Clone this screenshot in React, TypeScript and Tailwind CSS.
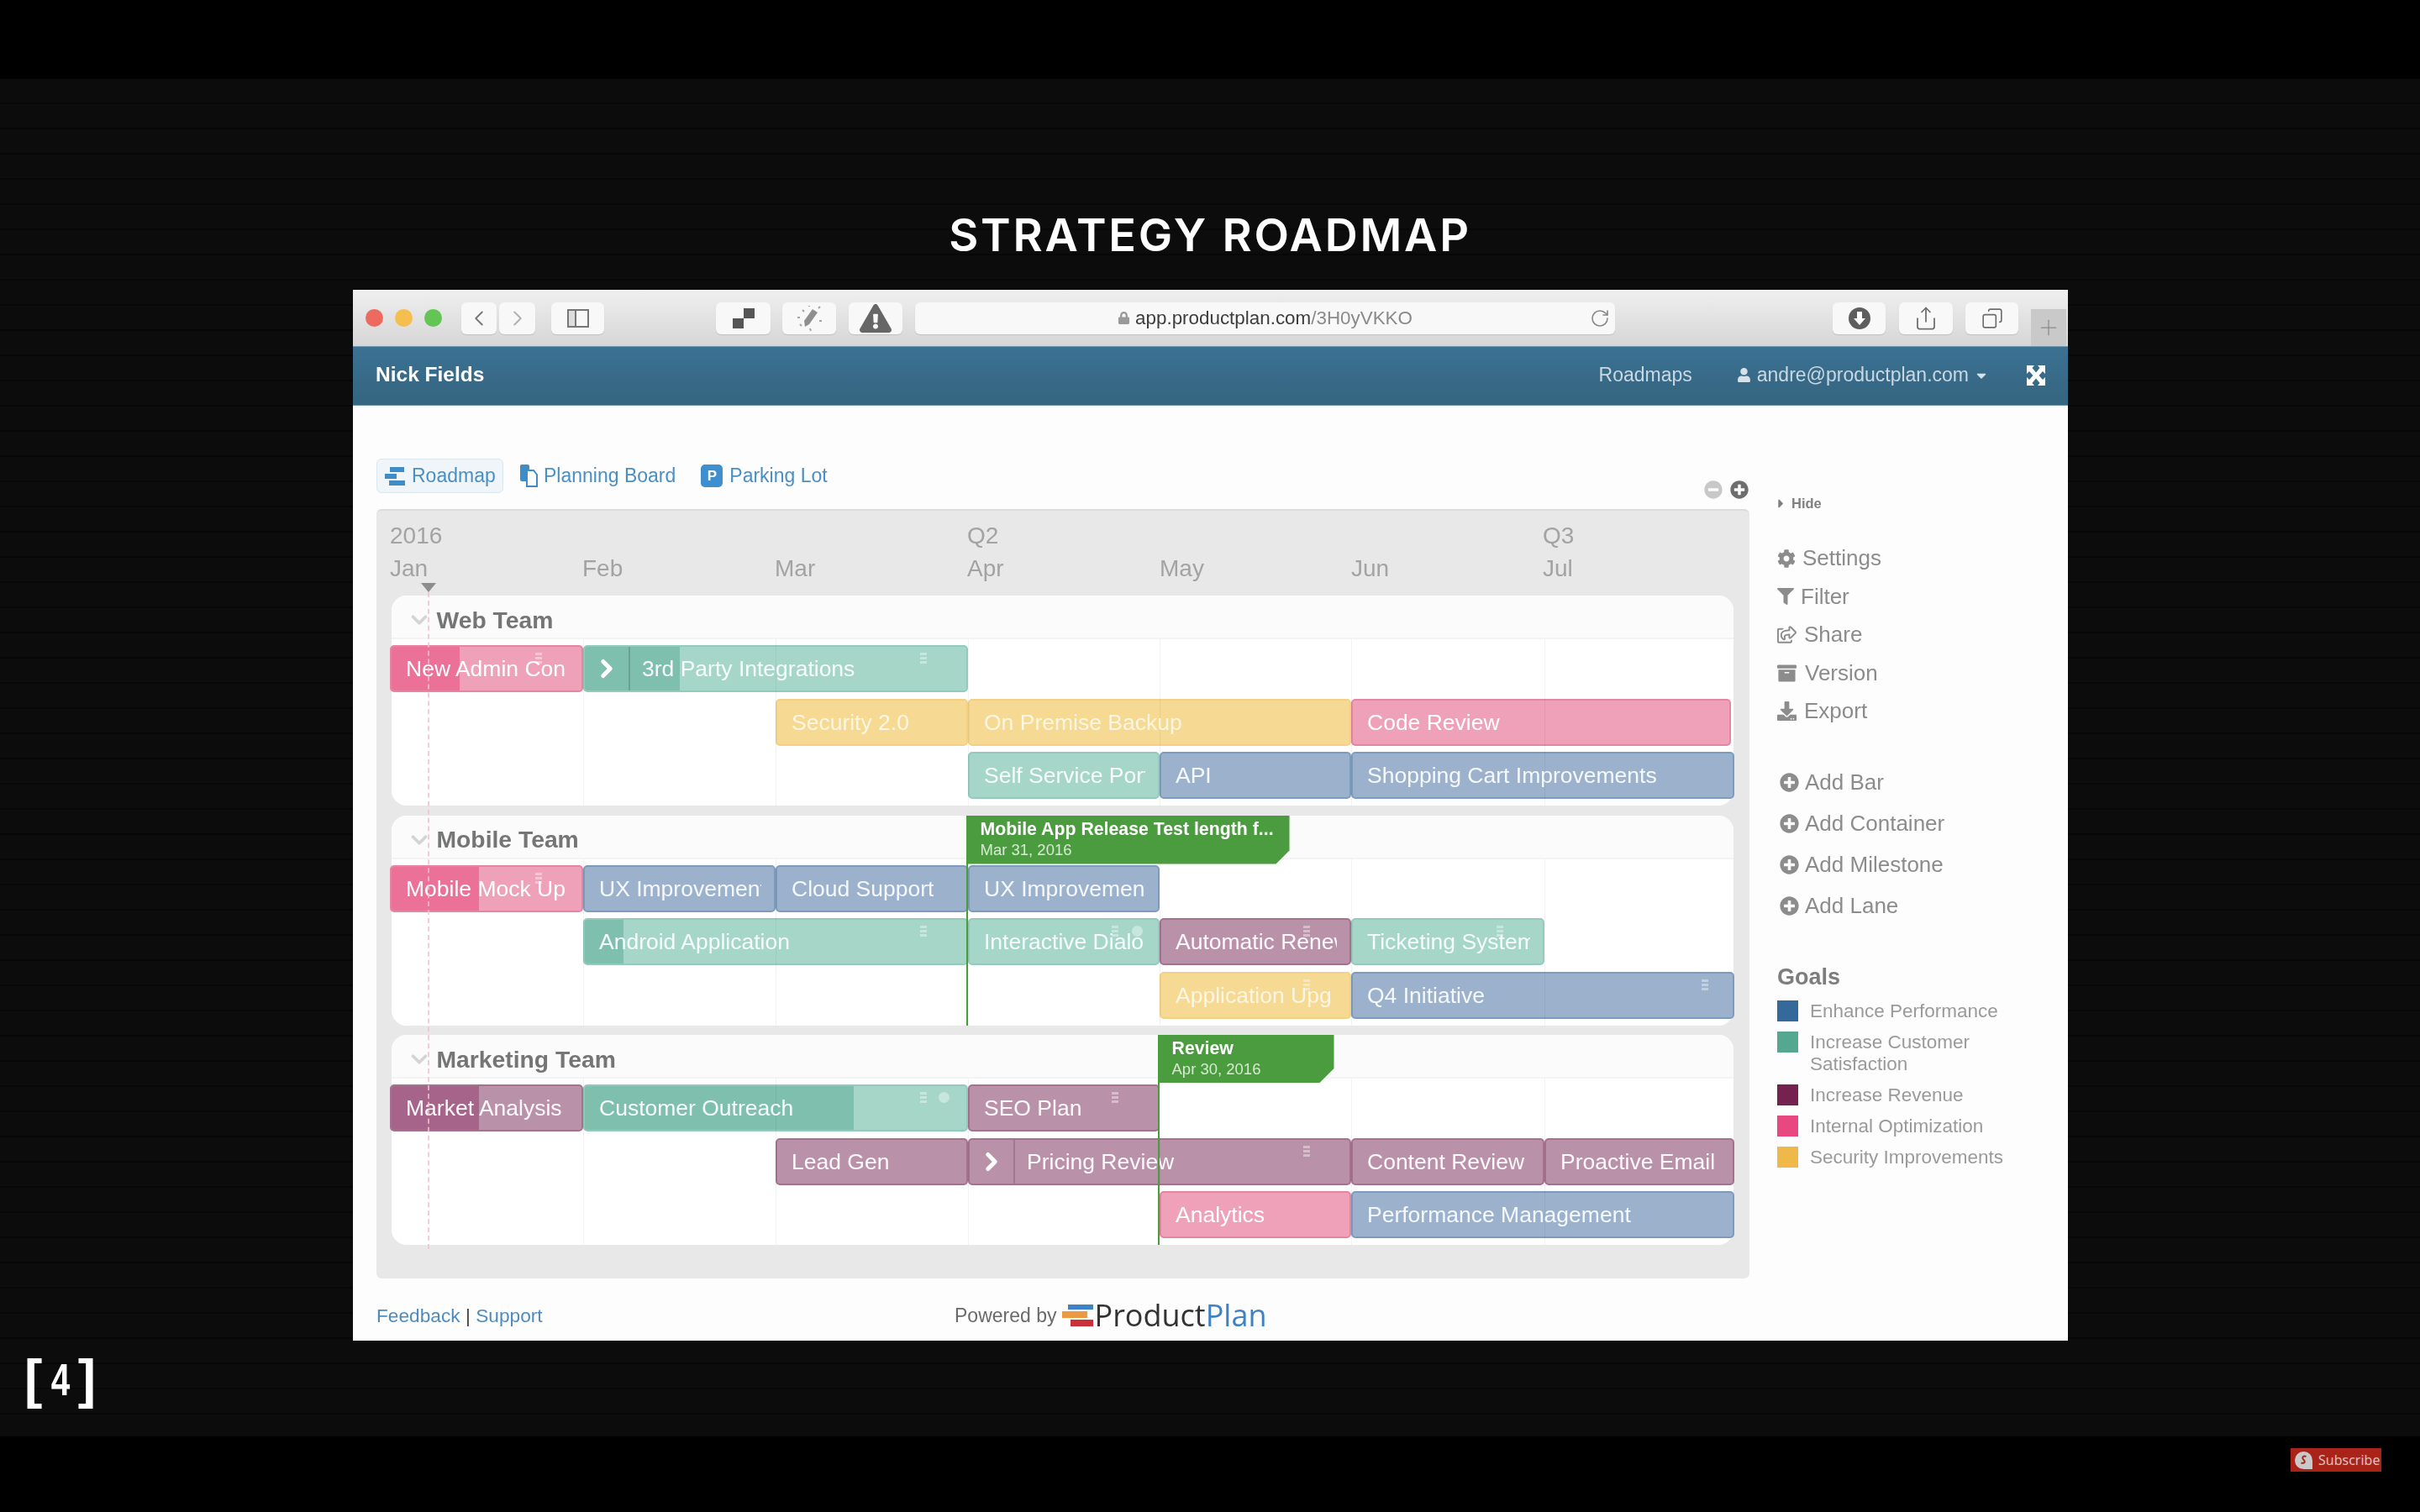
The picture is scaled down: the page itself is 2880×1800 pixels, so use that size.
import type { ReactNode } from 'react'
import { ChevronDown, ChevronLeft, ChevronRight, Copy, Plus, RotateCw, Share } from 'lucide-react'
import {
  FaArchive,
  FaCaretDown,
  FaCaretRight,
  FaCog,
  FaDownload,
  FaExclamationTriangle,
  FaFilter,
  FaLock,
  FaMinusCircle,
  FaPlusCircle,
  FaRegShareSquare,
  FaUser,
} from 'react-icons/fa'

const COLUMNS = 'grid grid-cols-[230px_229px_229px_228px_228px_230px_226px]'

const TONES = {
  pink: { bar: 'bg-[#eea1b8] border-[#e5859f] text-[#fff]', fill: 'bg-[#ec7199]' },
  green: { bar: 'bg-[#a6d6c8] border-[#93cabb] text-[#f6fcfa]', fill: 'bg-[#7fbfad]' },
  yellow: { bar: 'bg-[#f6d992] border-[#f3d084] text-[#fdf6e2]', fill: 'bg-[#f6d992]' },
  blue: { bar: 'bg-[#9bb1cc] border-[#7d9cbd] text-[#f5f8fb]', fill: 'bg-[#9bb1cc]' },
  maroon: { bar: 'bg-[#b991a9] border-[#a6708f] text-[#fdf8fb]', fill: 'bg-[#a6648a]' },
}

type BarData = {
  text: string
  tone: keyof typeof TONES
  pos: string
  fill?: number
  chevron?: boolean
  grip?: number
  dot?: number
}

const WEB: BarData[] = [
  { text: 'New Admin Con', tone: 'pink', pos: 'col-start-1 col-span-1 row-start-1', fill: 81, grip: 47 },
  { text: '3rd Party Integrations', tone: 'green', pos: 'col-start-2 col-span-2 row-start-1', fill: 113, chevron: true, grip: 47 },
  { text: 'Security 2.0', tone: 'yellow', pos: 'col-start-3 col-span-1 row-start-2' },
  { text: 'On Premise Backup', tone: 'yellow', pos: 'col-start-4 col-span-2 row-start-2' },
  { text: 'Code Review', tone: 'pink', pos: 'col-start-6 col-span-2 row-start-2 mr-[4px]' },
  { text: 'Self Service Port', tone: 'green', pos: 'col-start-4 col-span-1 row-start-3' },
  { text: 'API', tone: 'blue', pos: 'col-start-5 col-span-1 row-start-3' },
  { text: 'Shopping Cart Improvements', tone: 'blue', pos: 'col-start-6 col-span-2 row-start-3' },
]

const MOBILE: BarData[] = [
  { text: 'Mobile Mock Up', tone: 'pink', pos: 'col-start-1 col-span-1 row-start-1', fill: 104, grip: 47 },
  { text: 'UX Improvement', tone: 'blue', pos: 'col-start-2 col-span-1 row-start-1' },
  { text: 'Cloud Support', tone: 'blue', pos: 'col-start-3 col-span-1 row-start-1' },
  { text: 'UX Improvement', tone: 'blue', pos: 'col-start-4 col-span-1 row-start-1' },
  { text: 'Android Application', tone: 'green', pos: 'col-start-2 col-span-2 row-start-2', fill: 46, grip: 47 },
  { text: 'Interactive Dialo', tone: 'green', pos: 'col-start-4 col-span-1 row-start-2', grip: 47, dot: 18 },
  { text: 'Automatic Renew', tone: 'maroon', pos: 'col-start-5 col-span-1 row-start-2', grip: 47 },
  { text: 'Ticketing System', tone: 'green', pos: 'col-start-6 col-span-1 row-start-2', grip: 47 },
  { text: 'Application Upg', tone: 'yellow', pos: 'col-start-5 col-span-1 row-start-3', grip: 47 },
  { text: 'Q4 Initiative', tone: 'blue', pos: 'col-start-6 col-span-2 row-start-3', grip: 29 },
]

const MARKETING: BarData[] = [
  { text: 'Market Analysis', tone: 'maroon', pos: 'col-start-1 col-span-1 row-start-1', fill: 104 },
  { text: 'Customer Outreach', tone: 'green', pos: 'col-start-2 col-span-2 row-start-1', fill: 320, grip: 47, dot: 20 },
  { text: 'SEO Plan', tone: 'maroon', pos: 'col-start-4 col-span-1 row-start-1', grip: 47 },
  { text: 'Lead Gen', tone: 'maroon', pos: 'col-start-3 col-span-1 row-start-2' },
  { text: 'Pricing Review', tone: 'maroon', pos: 'col-start-4 col-span-2 row-start-2', chevron: true, grip: 47 },
  { text: 'Content Review', tone: 'maroon', pos: 'col-start-6 col-span-1 row-start-2' },
  { text: 'Proactive Email C', tone: 'maroon', pos: 'col-start-7 col-span-1 row-start-2' },
  { text: 'Analytics', tone: 'pink', pos: 'col-start-5 col-span-1 row-start-3' },
  { text: 'Performance Management', tone: 'blue', pos: 'col-start-6 col-span-2 row-start-3' },
]

const ACTIONS = [
  { label: 'Settings', icon: <FaCog size={22} />, box: 'w-[30px]' },
  { label: 'Filter', icon: <FaFilter size={20} />, box: 'w-[28px]' },
  { label: 'Share', icon: <FaRegShareSquare size={23} />, box: 'w-[32px]' },
  { label: 'Version', icon: <FaArchive size={23} />, box: 'w-[33px]' },
  { label: 'Export', icon: <FaDownload size={23} />, box: 'w-[32px]' },
]

const GOALS = [
  { label: 'Enhance Performance', color: 'bg-[#35689b]' },
  { label: 'Increase Customer Satisfaction', color: 'bg-[#55a890]' },
  { label: 'Increase Revenue', color: 'bg-[#742350]' },
  { label: 'Internal Optimization', color: 'bg-[#e8487f]' },
  { label: 'Security Improvements', color: 'bg-[#eeb84a]' },
]

function Grip({ right }: { right: number }) {
  return (
    <span className="absolute top-[7px] z-10 flex w-[8px] flex-col gap-[2px]" style={{ right }}>
      <i className="h-[3px] bg-white/40" />
      <i className="h-[3px] bg-white/40" />
      <i className="h-[3px] bg-white/40" />
    </span>
  )
}

function Bar({ bar }: { bar: BarData }) {
  const tone = TONES[bar.tone]
  return (
    <div className={`${bar.pos} ${tone.bar} relative flex h-[56px] items-center overflow-hidden rounded-[5px] border-2 text-[26.5px] leading-[34px]`}>
      {bar.fill && <div className={`${tone.fill} absolute inset-y-0 left-0`} style={{ width: bar.fill }} />}
      {bar.chevron && (
        <div className="relative z-10 flex h-full w-[54px] shrink-0 items-center justify-center border-r-2 border-black/15">
          <ChevronRight size={34} strokeWidth={3.5} className="text-white" />
        </div>
      )}
      <span className={`relative z-10 overflow-hidden whitespace-nowrap ${bar.chevron ? 'pl-[14px]' : 'ml-[17px] mr-[15px]'}`}>
        {bar.text}
      </span>
      {bar.grip && <Grip right={bar.grip} />}
      {bar.dot && <span className="absolute top-[7px] z-10 size-[13px] rounded-full bg-white/40" style={{ right: bar.dot }} />}
    </div>
  )
}

function Lane({ name, bars, children }: { name: string; bars: BarData[]; children?: ReactNode }) {
  return (
    <section className="relative ml-[1.5px] h-[250px] w-[1597px] rounded-[18px] bg-white">
      <div className="flex h-[52px] items-center rounded-t-[18px] border-b-2 border-[#f3f3f3] bg-[#fbfbfb] pl-[18px] pt-[8px]">
        <ChevronDown size={30} strokeWidth={3} className="text-[#d4d4d4]" />
        <h3 className="ml-[6px] text-[28.3px] font-bold text-[#757575]">{name}</h3>
      </div>
      <div className="relative -ml-[1.5px] h-[198px] w-[1600px] pt-[7px]">
        <div className={`${COLUMNS} grid-rows-[56px_56px_56px] gap-y-[7.5px]`}>
          {bars.map((bar) => (
            <Bar key={bar.text + bar.pos} bar={bar} />
          ))}
        </div>
        <div className={`${COLUMNS} absolute inset-0 overflow-hidden rounded-b-[18px]`}>
          <i />
          <i className="border-l border-black/5" />
          <i className="border-l border-black/5" />
          <i className="border-l border-black/5" />
          <i className="border-l border-black/5" />
          <i className="border-l border-black/5" />
          <i className="border-l border-black/5" />
        </div>
      </div>
      {children}
    </section>
  )
}

function ToolButton({ className, children }: { className: string; children?: ReactNode }) {
  return (
    <div className={`${className} flex h-[38px] shrink-0 items-center justify-center rounded-[6px] bg-[#f8f8f8] text-[#6d6d6d] shadow-[0_1px_1px_rgba(0,0,0,0.12)]`}>
      {children}
    </div>
  )
}

function Toolbar() {
  return (
    <div className="flex h-[67px] items-center bg-gradient-to-b from-[#efefef] to-[#d6d6d6] pl-[15px]">
      <span className="size-[21px] rounded-full bg-[#ec6a5e]" />
      <span className="ml-[14px] size-[21px] rounded-full bg-[#f5bf4f]" />
      <span className="ml-[14px] size-[21px] rounded-full bg-[#62c554]" />
      <ToolButton className="ml-[23px] w-[42px]">
        <ChevronLeft size={30} strokeWidth={1.5} className="text-[#777]" />
      </ToolButton>
      <ToolButton className="ml-[3px] w-[43px]">
        <ChevronRight size={30} strokeWidth={1.5} className="text-[#b0b0b0]" />
      </ToolButton>
      <ToolButton className="ml-[19px] w-[63px]">
        <svg width="28" height="24" viewBox="0 0 28 24" fill="none" stroke="#777" strokeWidth="2">
          <rect x="2" y="2" width="24" height="20" />
          <path d="M2 2h9v20H2z" fill="#ddd" />
        </svg>
      </ToolButton>
      <ToolButton className="ml-[133px] w-[65px]">
        <svg width="28" height="26" viewBox="0 0 28 26" fill="#555">
          <rect x="14" y="1" width="13" height="12" />
          <rect x="1" y="13" width="13" height="12" />
        </svg>
      </ToolButton>
      <ToolButton className="ml-[14px] w-[64px]">
        <svg width="38" height="34" viewBox="0 0 38 34">
          <path d="M14 27l-1-7 10-14 6 4-10 14z" fill="#8f8f8f" />
          <path d="M5 16h3M8 24l2 2M11 7l2 2M20 29l1 3M31 20h3M30 5l2-2M19 2v1" stroke="#a5a5a5" strokeWidth="2" />
        </svg>
      </ToolButton>
      <ToolButton className="ml-[15px] w-[64px]">
        <FaExclamationTriangle size={38} className="text-[#666]" />
      </ToolButton>
      <ToolButton className="relative ml-[15px] w-[833px] gap-[6px]">
        <FaLock size={15} className="text-[#999]" />
        <span className="text-[22.4px] text-[#3c3c3c]">
          app.productplan.com<span className="text-[#8a8a8a]">/3H0yVKKO</span>
        </span>
        <RotateCw size={24} strokeWidth={1.6} className="absolute right-[6px] text-[#888]" />
      </ToolButton>
      <ToolButton className="ml-[259px] w-[63px]">
        <svg width="28" height="28" viewBox="0 0 28 28">
          <circle cx="14" cy="14" r="13" fill="#5e5e5e" />
          <path d="M11 6h6v8h4l-7 8-7-8h4z" fill="#fff" />
        </svg>
      </ToolButton>
      <ToolButton className="ml-[16px] w-[64px]">
        <Share size={30} strokeWidth={1.4} />
      </ToolButton>
      <ToolButton className="ml-[15px] w-[63px]">
        <Copy size={26} strokeWidth={1.5} className="-scale-x-100" />
      </ToolButton>
      <div className="ml-[15px] flex h-[44px] w-[42px] items-center justify-center self-end bg-[#c9c9c9]">
        <Plus size={30} strokeWidth={1} className="text-[#8a8a8a]" />
      </div>
    </div>
  )
}

function AppHeader() {
  return (
    <header className="flex h-[71px] items-center border-y border-[#6f97ad] bg-gradient-to-b from-[#3b7193] to-[#35657f] pb-[2px] pl-[27px] pr-[26px] text-[23px] text-[#c9d8e2]">
      <span className="text-[24.5px] font-bold text-white">Nick Fields</span>
      <span className="ml-auto">Roadmaps</span>
      <FaUser size={17} className="ml-[53px] text-[#d6e2ea]" />
      <span className="ml-[7px]">andre@productplan.com</span>
      <FaCaretDown size={18} className="ml-[6px] text-[#d6e2ea]" />
      <svg className="ml-[44px]" width="24" height="26" viewBox="0 0 24 26" fill="#fff">
        <path d="M1 1h9L7.500 4 12 9.500 16.500 4 14 1h9v10l-3-3-4.500 5 4.500 5 3-3v10h-9l2.500-3L12 16.500 7.500 22l2.500 3H1V15l3 3 4.500-5L4 8l-3 3z" />
      </svg>
    </header>
  )
}

function Tabs() {
  return (
    <div className="flex h-[41px] items-center text-[23px] text-[#4a8fc4]">
      <div className="flex h-full w-[151px] items-center gap-[8px] rounded-[6px] border border-[#dbe7ef] bg-[#eff5f9] pl-[9px]">
        <svg width="24" height="24" viewBox="0 0 24 24" fill="#3f8cc6">
          <rect x="6" y="1" width="17" height="6" />
          <rect x="0" y="9" width="14" height="6" />
          <rect x="5" y="17" width="19" height="6" />
        </svg>
        Roadmap
      </div>
      <div className="ml-[20px] flex items-center gap-[7px]">
        <svg width="21" height="27" viewBox="0 0 21 27">
          <rect x="0" y="0" width="11" height="20" rx="2" fill="#3f8cc6" />
          <path d="M8 7h8l4 5v14H8z" fill="#fff" stroke="#3f8cc6" strokeWidth="2" />
        </svg>
        Planning Board
      </div>
      <div className="ml-[30px] flex items-center gap-[8px]">
        <span className="flex h-[27px] w-[26px] items-center justify-center rounded-[5px] bg-[#3d8fd0] text-[17px] font-bold text-white">P</span>
        Parking Lot
      </div>
      <div className="ml-auto mr-[1px] mt-[32px] flex gap-[9px]">
        <FaMinusCircle size={22} className="text-[#c8c8c8]" />
        <FaPlusCircle size={22} className="text-[#6e6e6e]" />
      </div>
    </div>
  )
}

function Milestone({ title, date, className, line }: { title: string; date: string; className: string; line: string }) {
  return (
    <>
      <div className={`${className} absolute top-0 z-20 flex flex-col justify-center bg-[#4a9c3f] pb-[1px] pl-[17px]`}>
        <span className="whitespace-nowrap text-[21.3px] font-bold leading-[26px] text-white">{title}</span>
        <span className="text-[18.5px] leading-[24px] text-[#d7ead2]">{date}</span>
      </div>
      <div className={`${line} absolute bottom-0 top-[57px] z-20 w-[2px] bg-[#4a9c3f]`} />
    </>
  )
}

function Timeline() {
  return (
    <div className="relative mt-[19px] h-[916px] rounded-[6px] border-t-2 border-[#dcdcdc] bg-[#e8e8e8] pl-[16px] pt-[14px]">
      <div className={`${COLUMNS} h-[87px] w-[1600px] grid-rows-[32px_32px] gap-y-[7px] text-[28px] leading-[32px] text-[#a3a3a3]`}>
        <span className="col-start-1">2016</span>
        <span className="col-start-4 -ml-[1px]">Q2</span>
        <span className="col-start-7 -ml-[2px]">Q3</span>
        <span className="col-start-1 row-start-2">Jan</span>
        <span className="col-start-2 row-start-2 -ml-[1px]">Feb</span>
        <span className="col-start-3 row-start-2 -ml-[1px]">Mar</span>
        <span className="col-start-4 row-start-2 -ml-[1px]">Apr</span>
        <span className="col-start-5 row-start-2">May</span>
        <span className="col-start-6 row-start-2">Jun</span>
        <span className="col-start-7 row-start-2 -ml-[2px]">Jul</span>
      </div>
      <div className="flex flex-col gap-[11.5px]">
        <Lane name="Web Team" bars={WEB} />
        <Lane name="Mobile Team" bars={MOBILE}>
          <Milestone
            title="Mobile App Release Test length f..."
            date="Mar 31, 2016"
            className="left-[684px] h-[58px] w-[385px] [clip-path:polygon(0_0,100%_0,100%_42px,369px_100%,0_100%)]"
            line="left-[684px]"
          />
        </Lane>
        <Lane name="Marketing Team" bars={MARKETING}>
          <Milestone
            title="Review"
            date="Apr 30, 2016"
            className="left-[912px] h-[57px] w-[210px] [clip-path:polygon(0_0,100%_0,100%_40px,193px_100%,0_100%)]"
            line="left-[912px]"
          />
        </Lane>
      </div>
      {/* today marker */}
      <svg className="absolute left-[53px] top-[86px] z-30" width="18" height="11" viewBox="0 0 18 11" fill="#8d8d8d">
        <path d="M0 0h18L9 11z" />
      </svg>
      <div className="absolute bottom-[35px] left-[61px] top-[97px] z-30 border-l-2 border-dashed border-[#f3c0cf]/80" />
    </div>
  )
}

function Footer() {
  return (
    <div className="flex h-[74px] items-center pt-[14px] text-[22.7px]">
      <div className="w-[688px] text-[#4e8cc0]">
        Feedback <span className="text-[#444]">|</span> Support
      </div>
      <span className="text-[23px] text-[#6a6a6a]">Powered by</span>
      <svg className="ml-[7px]" width="37" height="26" viewBox="0 0 37 26">
        <rect x="7" y="0" width="30" height="6" fill="#3d82c4" />
        <rect x="0" y="8" width="30" height="8" fill="#eb9a3f" />
        <rect x="10" y="18" width="27" height="8" fill="#c9303a" />
      </svg>
      <span className="ml-[1px] font-['Open_Sans',sans-serif] text-[36px] font-medium leading-none text-[#333]">
        Product<span className="text-[#3d82c4]">Plan</span>
      </span>
    </div>
  )
}

function SidePanel() {
  return (
    <aside className="flex-1 pl-[33px] pt-[106px] text-[#8c8c8c]">
      <div className="flex h-[20px] items-center text-[16.5px] font-bold text-[#7f7f7f]">
        <FaCaretRight size={17} className="-ml-[4px]" />
        <span className="ml-[4px]">Hide</span>
      </div>
      <ul className="mt-[33px] text-[26px]">
        {ACTIONS.map(({ label, icon, box }) => (
          <li key={label} className="flex h-[45.5px] items-center">
            <span className={`${box} shrink-0`}>{icon}</span>
            {label}
          </li>
        ))}
      </ul>
      <ul className="mt-[37px] text-[26px]">
        {['Add Bar', 'Add Container', 'Add Milestone', 'Add Lane'].map((label) => (
          <li key={label} className="flex h-[49px] items-center pl-[3px]">
            <FaPlusCircle size={23} className="mr-[7px] shrink-0" />
            {label}
          </li>
        ))}
      </ul>
      <h4 className="mt-[44.5px] text-[27px] font-bold leading-[32px] text-[#7d7d7d]">Goals</h4>
      <ul className="mt-[12px] flex flex-col gap-[11px]">
        {GOALS.map(({ label, color }) => (
          <li key={label} className="flex text-[22.5px] leading-[26px] text-[#9a9a9a]">
            <span className={`${color} mr-[14px] size-[25px] shrink-0`} />
            <span className="w-[260px]">{label}</span>
          </li>
        ))}
      </ul>
    </aside>
  )
}

export default function App() {
  return (
    <div className="flex h-[1800px] w-[2880px] flex-col overflow-hidden bg-black font-['Liberation_Sans',Arial,sans-serif]">
      <div className="h-[94px] shrink-0" />
      <main className="h-[1616px] shrink-0 bg-[repeating-linear-gradient(180deg,#0c0c0c_0,#0c0c0c_28px,#070707_28px,#070707_30px)]">
        <h1 className="flex h-[251px] justify-center pt-[157px] font-['Inter',sans-serif] text-[54px] font-semibold leading-[58px] tracking-[2.8px] text-white">
          STRATEGY ROADMAP
        </h1>
        <div className="ml-[420px] flex h-[1251px] w-[2041px] flex-col overflow-hidden blur-[0.6px]">
          <Toolbar />
          <AppHeader />
          <div className="flex flex-1 bg-[#fdfdfd]">
            <div className="w-[1662px] shrink-0 pl-[28px] pt-[63px]">
              <Tabs />
              <Timeline />
              <Footer />
            </div>
            <SidePanel />
          </div>
        </div>
        <div className="ml-[29px] mt-[16px] flex h-[60px] items-center font-bold leading-none text-white">
          <span className="text-[64px]">[</span>
          <span className="ml-[6.5px] scale-x-75 text-[54px]">4</span>
          <span className="ml-[6px] text-[64px]">]</span>
        </div>
      </main>
      <div className="flex flex-1 items-start justify-end pr-[46px] pt-[14px]">
        <div className="flex h-[28px] w-[108px] items-center gap-[7px] bg-[#a92318] pl-[5px] font-['Noto_Sans',sans-serif] text-[16px] text-[#d8c4c0]">
          <svg width="21" height="21" viewBox="0 0 21 21">
            <path d="M10.5 0a10.5 10.5 0 1 0 0 21h10.5V10.5A10.5 10.5 0 0 0 10.5 0z" fill="#c9c9c9" />
            <path d="M13.5 6c-3-1.500-5 .5-4 2.500l2 2.500c1 2-1 3.500-4 2.500" fill="none" stroke="#a92318" strokeWidth="2" />
          </svg>
          Subscribe
        </div>
      </div>
    </div>
  )
}
